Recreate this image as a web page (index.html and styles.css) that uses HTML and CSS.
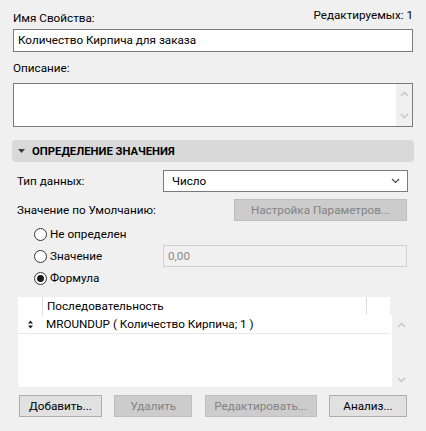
FILE: index.html
```html
<!DOCTYPE html>
<html lang="ru">
<head>
<meta charset="utf-8">
<link rel="stylesheet" href="styles.css">
</head>
<body>
<div class="panel">
  <div class="name-head">
    <span class="lbl name-lbl">Имя Свойства:</span>
    <span class="count">Редактируемых: 1</span>
  </div>
  <div class="field">Количество Кирпича для заказа</div>
  <div class="lbl desc-lbl">Описание:</div>
  <div class="area">
    <div class="area-body"></div>
    <div class="vscroll">
      <svg class="chev" width="9" height="6" viewBox="0 0 9 6"><path d="M1 5 L4.5 1.5 L8 5" fill="none" stroke="#c4c4c4" stroke-width="1.3"/></svg>
      <svg class="chev" width="9" height="6" viewBox="0 0 9 6"><path d="M1 1 L4.5 4.5 L8 1" fill="none" stroke="#c4c4c4" stroke-width="1.3"/></svg>
    </div>
  </div>
  <div class="section">
    <svg class="tri" width="7" height="4" viewBox="0 0 7 4"><path d="M0 0 H7 L3.5 4 Z" fill="#3c3c3c"/></svg>
    <span class="section-title">ОПРЕДЕЛЕНИЕ ЗНАЧЕНИЯ</span>
  </div>
  <div class="body">
    <div class="row type-row">
      <span class="row-lbl">Тип данных:</span>
      <div class="select">
        <span>Число</span>
        <svg width="9" height="6" viewBox="0 0 9 6"><path d="M1 1 L4.5 4.5 L8 1" fill="none" stroke="#444" stroke-width="1.1"/></svg>
      </div>
    </div>
    <div class="row def-row">
      <span class="row-lbl">Значение по Умолчанию:</span>
      <div class="btn disabled param-btn">Настройка Параметров...</div>
    </div>
    <div class="radios">
      <div class="radio-row">
        <span class="radio-lbl"><span class="radio"></span>Не определен</span>
      </div>
      <div class="radio-row">
        <span class="radio-lbl"><span class="radio"></span>Значение</span>
        <div class="value-field">0,00</div>
      </div>
      <div class="radio-row">
        <span class="radio-lbl"><span class="radio checked"></span>Формула</span>
      </div>
    </div>
    <div class="table">
      <div class="thead">
        <div class="th-cells">
          <div class="th-icon"></div>
          <div class="th-main">Последовательность</div>
          <div class="th-end"></div>
        </div>
        <div class="th-gap"></div>
      </div>
      <div class="tbody">
        <div class="rows">
          <div class="trow">
            <svg class="sort" width="5" height="9" viewBox="0 0 5 9"><path d="M0 3.5 L2.5 0.5 L5 3.5 Z M0 5.5 L2.5 8.5 L5 5.5 Z" fill="#1a1a1a"/></svg>
            <span class="trow-text">MROUNDUP ( Количество Кирпича; 1 )</span>
          </div>
        </div>
        <div class="tscroll">
          <svg class="chev" width="9" height="6" viewBox="0 0 9 6"><path d="M1 5 L4.5 1.5 L8 5" fill="none" stroke="#c4c4c4" stroke-width="1.3"/></svg>
          <svg class="chev" width="9" height="6" viewBox="0 0 9 6"><path d="M1 1 L4.5 4.5 L8 1" fill="none" stroke="#c4c4c4" stroke-width="1.3"/></svg>
        </div>
      </div>
    </div>
    <div class="buttons">
      <div class="btn w-add">Добавить...</div>
      <div class="btn disabled w-del">Удалить</div>
      <div class="btn disabled w-edit">Редактировать...</div>
      <div class="btn w-an">Анализ...</div>
    </div>
  </div>
</div>
</body>
</html>
```

FILE: styles.css
```css
html, body {
  margin: 0;
  padding: 0;
  background: #f0f0f0;
}
body {
  font-family: Roboto, "Liberation Sans", Arial, sans-serif;
  font-size: 11.7px;
  color: #000;
  width: 426px;
  height: 431px;
  overflow: hidden;
}
.panel {
  padding: 0 13px;
}
.name-head {
  height: 29px;
  display: flex;
  justify-content: space-between;
  align-items: flex-start;
}
.lbl {
  line-height: 16px;
}
.name-lbl {
  padding-top: 10px;
}
.count {
  padding-top: 7px;
  line-height: 16px;
}
.field {
  height: 23px;
  box-sizing: border-box;
  border: 1px solid #7a7a7a;
  background: #fff;
  padding-left: 4px;
  line-height: 21px;
}
.desc-lbl {
  margin-top: 8px;
  margin-bottom: 7px;
}
.area {
  height: 44px;
  box-sizing: border-box;
  border: 1px solid #7a7a7a;
  background: #fff;
  display: flex;
}
.area-body {
  flex: 1;
}
.vscroll {
  width: 16px;
  background: #f0f0f0;
  display: flex;
  flex-direction: column;
  align-items: center;
  justify-content: space-between;
  padding: 7px 0 7px;
}
.chev {
  display: block;
}
.section {
  margin: 13px -1px 0;
  height: 22px;
  background: #d9d9d9;
  border-radius: 4px;
  display: flex;
  align-items: center;
}
.tri {
  margin-left: 6px;
  margin-right: 7px;
}
.section-title {
  font-weight: bold;
  font-size: 11.3px;
}
.body {
  padding-left: 4px;
  padding-right: 5px;
}
.row {
  height: 22px;
  display: flex;
  align-items: center;
  justify-content: space-between;
}
.type-row {
  margin-top: 8px;
}
.def-row {
  margin-top: 7px;
}
.select {
  width: 245px;
  height: 22px;
  box-sizing: border-box;
  border: 1px solid #7a7a7a;
  background: #fff;
  display: flex;
  align-items: center;
  justify-content: space-between;
  padding: 0 7px 0 8px;
}
.btn {
  height: 22px;
  box-sizing: border-box;
  border: 1px solid #adadad;
  background: #e1e1e1;
  display: flex;
  align-items: center;
  justify-content: center;
}
.btn.disabled {
  background: #cccccc;
  border-color: #bfbfbf;
  color: #838383;
}
.param-btn {
  width: 173px;
  margin-right: 1px;
}
.radios {
  margin-top: 2px;
}
.radio-row {
  height: 22px;
  display: flex;
  align-items: center;
}
.radio-lbl {
  width: 146px;
  display: flex;
  align-items: center;
}
.radio {
  width: 13px;
  height: 13px;
  box-sizing: border-box;
  border: 1px solid #333;
  border-radius: 50%;
  background: #fff;
  margin-left: 17px;
  margin-right: 3px;
  position: relative;
}
.radio.checked::after {
  content: "";
  position: absolute;
  left: 2px;
  top: 2px;
  width: 7px;
  height: 7px;
  border-radius: 50%;
  background: #1a1a1a;
}
.value-field {
  width: 244px;
  height: 22px;
  box-sizing: border-box;
  border: 1px solid #cfcfcf;
  background: #f0f0f0;
  color: #8a8a8a;
  padding-left: 4px;
  line-height: 20px;
}
.table {
  margin: 8px -2px 0 1px;
  height: 90px;
  display: flex;
  flex-direction: column;
}
.thead {
  height: 18px;
  display: flex;
}
.th-cells {
  flex: 1;
  display: flex;
  background: #fff;
}
.th-icon {
  width: 24px;
  border-right: 1px solid #dcdcdc;
}
.th-main {
  flex: 1;
  padding-left: 4px;
  line-height: 18px;
  border-right: 1px solid #dcdcdc;
}
.th-end {
  width: 23px;
}
.th-gap {
  width: 20px;
}
.tbody {
  flex: 1;
  display: flex;
}
.rows {
  flex: 1;
  background: #fff;
}
.trow {
  height: 19px;
  box-sizing: border-box;
  border-bottom: 1px solid #e8e8e8;
  display: flex;
  align-items: center;
  margin-right: 2px;
}
.sort {
  margin-left: 10px;
  margin-right: 13px;
}
.tscroll {
  width: 18px;
  display: flex;
  flex-direction: column;
  align-items: center;
  justify-content: space-between;
  padding: 7px 0 4px;
}
.buttons {
  margin-top: 8px;
  margin-left: 2px;
  margin-right: 1px;
  display: flex;
  justify-content: space-between;
}
.w-add { width: 83px; }
.w-del { width: 78px; }
.w-edit { width: 112px; }
.w-an { width: 78px; }
```
